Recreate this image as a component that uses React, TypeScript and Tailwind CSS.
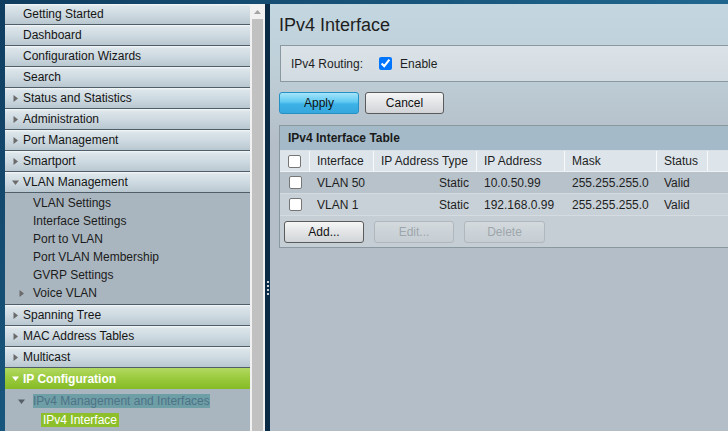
import React from 'react';

const FONT = { fontFamily: '"Liberation Sans", Arial, sans-serif' };

const Arrow = ({ down, className = 'text-[#6b6b6b]' }: { down?: boolean; className?: string }) => (
  <svg width="7" height="7" viewBox="0 0 7 7" className={className}>
    {down ? <path d="M0 1.5 L7 1.5 L3.5 6 Z" fill="currentColor" /> : <path d="M1.5 0 L6 3.5 L1.5 7 Z" fill="currentColor" />}
  </svg>
);

function NavRow({ label, arrow }: { label: string; arrow?: 'right' | 'down' }) {
  return (
    <div className="h-[21px] flex items-center border-b border-[#4f5e69] bg-[linear-gradient(to_bottom,#f3f7f9_0%,#dbe5ea_12%,#cdd9e0_55%,#b9c7d0_100%)]">
      <div className="w-[18px] flex justify-center pl-[2px]">{arrow && <Arrow down={arrow === 'down'} />}</div>
      <span className="text-[12px] text-[#151515] leading-none">{label}</span>
    </div>
  );
}

function SubItem({ label, arrow }: { label: string; arrow?: boolean }) {
  return (
    <div className="h-[18px] flex items-center">
      <div className="w-[28px] flex justify-end pr-[8px]">{arrow && <Arrow />}</div>
      <span className="text-[12px] text-[#1b1b1b] leading-none">{label}</span>
    </div>
  );
}

function Btn({ label, w, kind }: { label: string; w: string; kind: 'blue' | 'gray' | 'off' }) {
  const styles = {
    blue: 'border-[#2590c4] bg-[linear-gradient(to_bottom,#a5e4fa_0%,#5ec9f1_45%,#3cb2e6_55%,#36a7dd_100%)] text-[#111]',
    gray: 'border-[#5b5b5b] bg-[linear-gradient(to_bottom,#f6f6f6_0%,#e2e4e6_50%,#d2d5d8_100%)] text-[#111]',
    off: 'border-[#b0b8be] bg-[linear-gradient(to_bottom,#d3d9dd_0%,#c5cdd3_100%)] text-[#9ea6ac]',
  }[kind];
  return (
    <div className={`${w} h-[22px] rounded-[3px] border flex items-center justify-center text-[12px] ${styles}`}>{label}</div>
  );
}

const Check = () => (
  <div className="w-[13px] h-[13px] rounded-[2px] border border-[#767676] bg-white" />
);

const COLS = 'grid grid-cols-[30px_64px_103px_88px_92px_51px_1fr]';

export default function App() {
  const rows = [
    { name: 'VLAN 50', ip: '10.0.50.99', bg: 'bg-[#b8c2cb]' },
    { name: 'VLAN 1', ip: '192.168.0.99', bg: 'bg-[#c9d1d8]' },
  ];
  return (
    <div
      style={FONT}
      className="w-[728px] h-[431px] overflow-hidden flex pt-[4px] pl-[5px] bg-[linear-gradient(135deg,#0f3d60_0%,#1c5f87_50%,#2a7aa0_100%)]"
    >
      {/* Navigation */}
      <div className="w-[245px] shrink-0 flex flex-col bg-[#aab6bf]">
        <NavRow label="Getting Started" />
        <NavRow label="Dashboard" />
        <NavRow label="Configuration Wizards" />
        <NavRow label="Search" />
        <NavRow label="Status and Statistics" arrow="right" />
        <NavRow label="Administration" arrow="right" />
        <NavRow label="Port Management" arrow="right" />
        <NavRow label="Smartport" arrow="right" />
        <NavRow label="VLAN Management" arrow="down" />
        <div className="pt-[1px] pb-[2px] border-b border-[#4f5e69]">
          <SubItem label="VLAN Settings" />
          <SubItem label="Interface Settings" />
          <SubItem label="Port to VLAN" />
          <SubItem label="Port VLAN Membership" />
          <SubItem label="GVRP Settings" />
          <SubItem label="Voice VLAN" arrow />
        </div>
        <NavRow label="Spanning Tree" arrow="right" />
        <NavRow label="MAC Address Tables" arrow="right" />
        <NavRow label="Multicast" arrow="right" />
        <div className="h-[21px] flex items-center bg-[linear-gradient(to_bottom,#b2d963_0%,#9ccb40_45%,#86bb25_100%)]">
          <div className="w-[18px] flex justify-center pl-[2px]"><Arrow down className="text-white" /></div>
          <span className="text-[12px] font-bold text-white leading-none">IP Configuration</span>
        </div>
        <div className="pt-[5px]">
          <div className="h-[14px] flex items-center">
            <div className="w-[28px] flex justify-end pr-[8px]"><Arrow down className="text-[#555e66]" /></div>
            <span className="h-[14px] w-[177px] flex items-center bg-[#6f9fa6] text-[12px] text-[#4e7286] leading-none">IPv4 Management and Interfaces</span>
          </div>
          <div className="h-[14px] mt-[5px] flex items-center pl-[36px]">
            <span className="h-[14px] px-[2px] flex items-center bg-[#8dbf2a] text-[12px] text-white leading-none">IPv4 Interface</span>
          </div>
        </div>
      </div>

      {/* Scrollbar */}
      <div className="w-[15px] shrink-0 bg-[#f1f1f1] flex flex-col items-center">
        <div className="h-[15px] flex items-center justify-center">
          <svg width="7" height="4" viewBox="0 0 7 4"><path d="M0 4 L3.5 0 L7 4 Z" fill="#a3a3a3" /></svg>
        </div>
        <div className="w-[11px] flex-1 bg-[#c1c1c1]" />
      </div>

      {/* Divider */}
      <div className="w-[5px] shrink-0 bg-[#0b2a46] flex flex-col items-center pt-[277px] gap-[2px]">
        {[0, 1, 2, 3].map(i => (
          <div key={i} className="w-[2px] h-[2px] bg-[#c9d4dc]" />
        ))}
      </div>

      {/* Main */}
      <div className="flex-1 min-w-0 flex flex-col bg-[linear-gradient(to_bottom,#c3d7e0_0px,#bfd0d9_60px,#b4bec8_140px,#b4bec8_100%)]">
        <div className="h-[41px] flex items-center pl-[9px]">
          <span className="text-[18px] text-[#1e1e1e] leading-none">IPv4 Interface</span>
        </div>
        <div className="ml-[10px] -mr-[4px] h-[37px] border border-[#8a989f] bg-[linear-gradient(to_bottom,#dbe3e8,#d2dbe1)] flex items-center pl-[10px]">
          <span className="text-[12px] text-[#1e1e1e]">IPv4 Routing:</span>
          <input type="checkbox" defaultChecked className="ml-[16px] w-[13px] h-[13px] accent-[#0075ff]" />
          <span className="ml-[8px] text-[12px] text-[#1e1e1e]">Enable</span>
        </div>
        <div className="flex gap-[6px] ml-[9px] mt-[10px]">
          <Btn label="Apply" w="w-[80px]" kind="blue" />
          <Btn label="Cancel" w="w-[79px]" kind="gray" />
        </div>
        <div className="ml-[9px] -mr-[4px] mt-[11px] border border-[#8a989f]">
          <div className="h-[25px] flex items-center pl-[8px] bg-[#a4bac9] border-b border-[#d9e1e6]">
            <span className="text-[12px] font-bold text-[#1a1a1a]">IPv4 Interface Table</span>
          </div>
          <div className={`${COLS} h-[21px] bg-[#dde5eb] border-b border-[#eef2f5] text-[12px] text-[#1e1e1e]`}>
            <div className="flex items-center justify-center border-r border-[#f7f9fa]"><Check /></div>
            <div className="flex items-center pl-[7px] border-r border-[#f7f9fa]">Interface</div>
            <div className="flex items-center pl-[7px] border-r border-[#f7f9fa]">IP Address Type</div>
            <div className="flex items-center pl-[7px] border-r border-[#f7f9fa]">IP Address</div>
            <div className="flex items-center pl-[7px] border-r border-[#f7f9fa]">Mask</div>
            <div className="flex items-center pl-[7px] border-r border-[#f7f9fa]">Status</div>
            <div />
          </div>
          {rows.map(r => (
            <div key={r.name} className={`${COLS} h-[22px] ${r.bg} border-b border-[#d5dce1] text-[12px] text-[#1e1e1e]`}>
              <div className="flex items-center justify-center"><Check /></div>
              <div className="flex items-center pl-[7px]">{r.name}</div>
              <div className="flex items-center justify-end pr-[8px]">Static</div>
              <div className="flex items-center pl-[7px]">{r.ip}</div>
              <div className="flex items-center pl-[7px]">255.255.255.0</div>
              <div className="flex items-center pl-[7px]">Valid</div>
              <div />
            </div>
          ))}
          <div className="h-[31px] bg-[#c6ced5] flex items-center pl-[4px] gap-[10px]">
            <Btn label="Add..." w="w-[80px]" kind="gray" />
            <Btn label="Edit..." w="w-[80px]" kind="off" />
            <Btn label="Delete" w="w-[81px]" kind="off" />
          </div>
        </div>
      </div>
    </div>
  );
}
